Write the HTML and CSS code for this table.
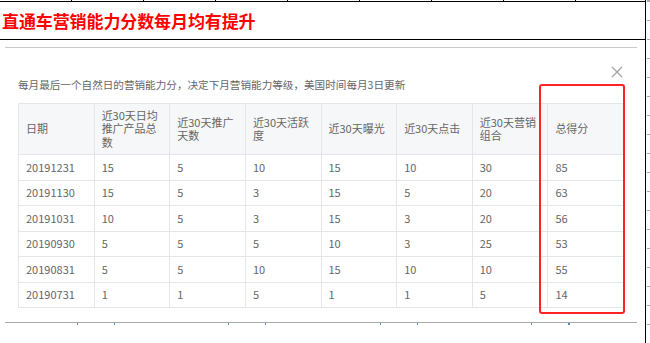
FILE: index.html
```html
<!DOCTYPE html>
<html lang="zh">
<head>
<meta charset="utf-8">
<link rel="stylesheet" href="styles.css">
</head>
<body>
<div class="page">
  <div class="doc">
    <div class="topcells">
      <span></span><span></span><span></span><span></span><span></span><span></span><span></span><span></span>
    </div>
    <div class="title">直通车营销能力分数每月均有提升</div>
    <div class="panel">
      <div class="panel-line"></div>
      <div class="head">
        <svg class="close" width="12" height="12" viewBox="0 0 12 12"><path d="M1 1L11 11M11 1L1 11" stroke="#a0a0a0" stroke-width="1.2" fill="none"/></svg>
      </div>
      <p class="desc">每月最后一个自然日的营销能力分，决定下月营销能力等级，美国时间每月3日更新</p>
      <table class="grid">
        <thead>
          <tr>
            <th>日期</th>
            <th>近30天日均推广产品总数</th>
            <th>近30天推广天数</th>
            <th>近30天活跃度</th>
            <th>近30天曝光</th>
            <th>近30天点击</th>
            <th>近30天营销组合</th>
            <th>总得分</th>
          </tr>
        </thead>
        <tbody>
          <tr><td>20191231</td><td>15</td><td>5</td><td>10</td><td>15</td><td>10</td><td>30</td><td>85</td></tr>
          <tr><td>20191130</td><td>15</td><td>5</td><td>3</td><td>15</td><td>5</td><td>20</td><td>63</td></tr>
          <tr><td>20191031</td><td>10</td><td>5</td><td>3</td><td>15</td><td>3</td><td>20</td><td>56</td></tr>
          <tr><td>20190930</td><td>5</td><td>5</td><td>5</td><td>10</td><td>3</td><td>25</td><td>53</td></tr>
          <tr><td>20190831</td><td>5</td><td>5</td><td>10</td><td>15</td><td>10</td><td>10</td><td>55</td></tr>
          <tr><td>20190731</td><td>1</td><td>1</td><td>5</td><td>1</td><td>1</td><td>5</td><td>14</td></tr>
        </tbody>
      </table>
      <div class="panel-bottom"></div>
      <div class="ticks"></div>
      <div class="highlight"></div>
    </div>
  </div>
  <div class="ruler"></div>
</div>
</body>
</html>
```
FILE: styles.css
```css
html, body {
  margin: 0;
  padding: 0;
  background: #fff;
}
body {
  width: 650px;
  height: 343px;
  overflow: hidden;
  font-family: "Noto Sans CJK SC", "Noto Sans", sans-serif;
}
.page {
  display: flex;
  height: 343px;
}
.doc {
  width: 646px;
  box-sizing: border-box;
  border-right: 1px solid #000;
  display: flex;
  flex-direction: column;
}
.ruler {
  flex: 1;
  margin-left: 1px;
  background-image: repeating-linear-gradient(to bottom, #a8a8a8 0 1px, transparent 1px 19px);
  background-position: 0 1px;
}
.topcells {
  display: flex;
  height: 1px;
  border-bottom: 1px solid #000;
}
.topcells span {
  width: 72px;
  box-sizing: border-box;
  border-right: 1px solid #000;
}
.title {
  height: 37px;
  line-height: 37px;
  border-bottom: 1px solid #000;
  padding-left: 2px;
  color: #ff0000;
  font-size: 17px;
  font-weight: 700;
  letter-spacing: -0.1px;
}
.panel {
  position: relative;
  flex: 1;
}
.panel-line {
  margin: 7px 8px 0 5px;
  border-top: 1px solid #cacaca;
}
.head {
  display: flex;
  justify-content: flex-end;
  padding: 18px 22px 0 0;
  height: 12px;
}
.close {
  display: block;
}
.desc {
  margin: 0 0 0 18px;
  font-size: 10.6px;
  line-height: 14px;
  color: #666;
}
.grid {
  margin: 11px 0 0 18px;
  width: 606px;
  table-layout: fixed;
  border-collapse: collapse;
  color: #666;
  font-size: 11px;
}
.grid th,
.grid td {
  border: 1px solid #e5e6e9;
  text-align: left;
  vertical-align: middle;
  line-height: 13.5px;
  padding: 5.5px 10px 5.5px 7px;
  box-sizing: border-box;
  height: 25.5px;
}
.grid th {
  background: #f6f7f9;
  font-weight: 400;
  padding: 4.5px 10px 4.5px 7px;
  height: 51px;
}
.panel-bottom {
  margin: 14px 8px 0 5px;
  border-top: 1px solid #a9a9a9;
}
.ticks {
  margin: 0 8px 0 5px;
  height: 2px;
  background-image: repeating-linear-gradient(90deg, transparent 0 72px, #5b82c8 72px 73px, transparent 73px 109px, #5b82c8 109px 110px, transparent 110px 151.5px);
}
.highlight {
  position: absolute;
  left: 539px;
  top: 44px;
  width: 82px;
  height: 226px;
  border: 2px solid #ff2222;
  border-radius: 3px;
}
```
